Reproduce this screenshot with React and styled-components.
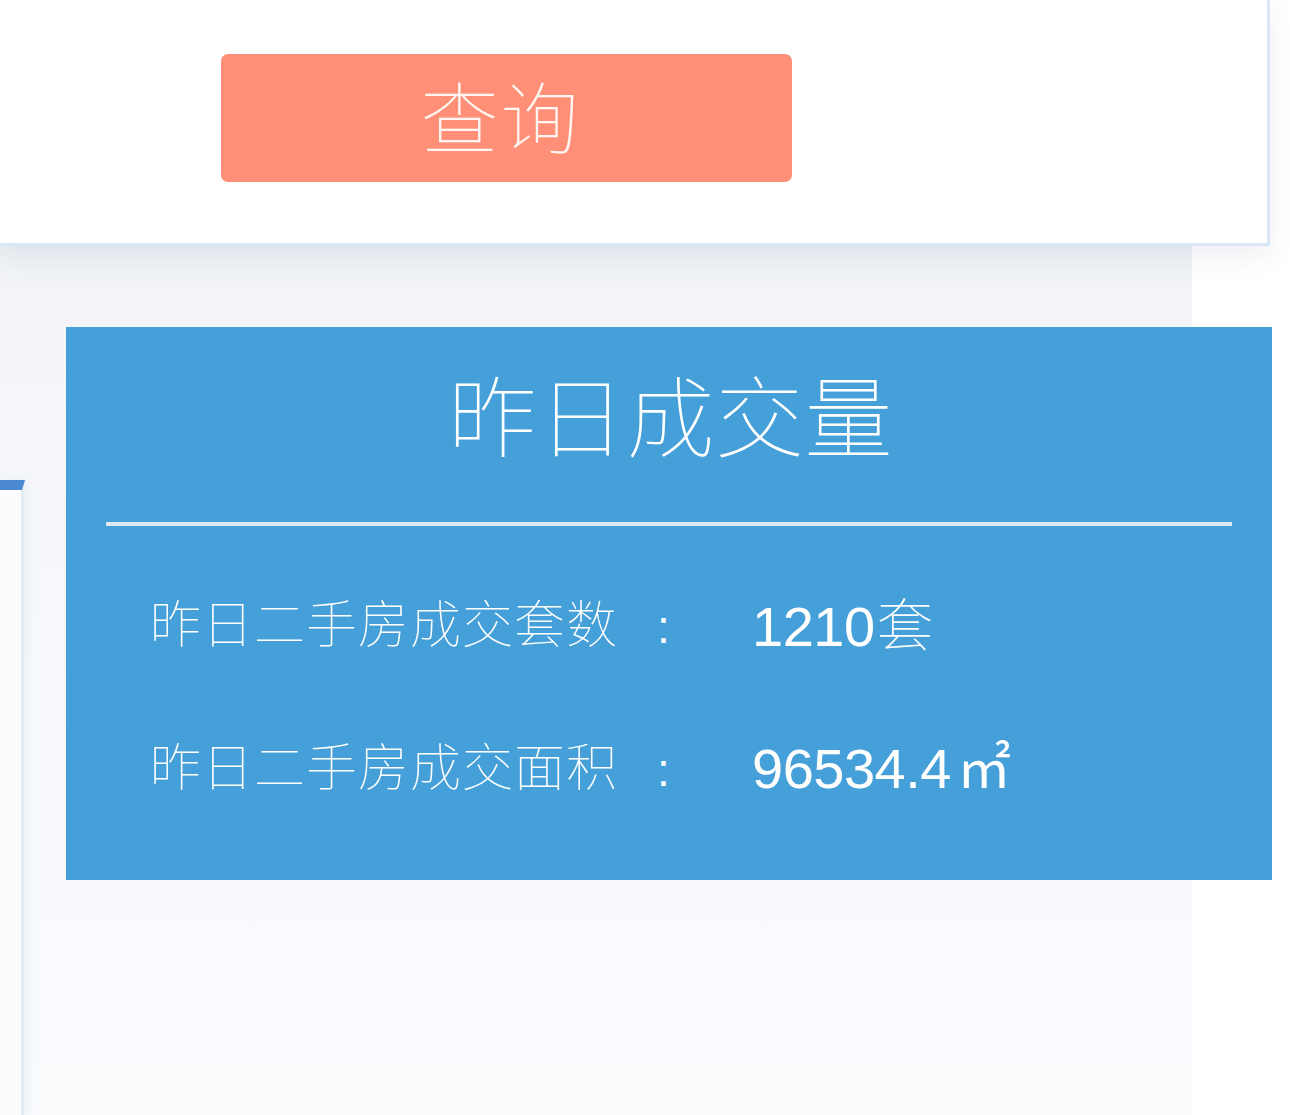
import React from "react";
import styled, {createGlobalStyle} from "styled-components";

const GlobalStyle = createGlobalStyle`
  html, body {
    margin: 0;
    padding: 0;
    background: #ffffff;
  }
  body {
    font-family: "Noto Sans CJK SC", "Noto Sans", sans-serif;
    overflow: hidden;
  }
`;

const stats = [
  {label: "昨日二手房成交套数", value: "1210", unit: "套"},
  {label: "昨日二手房成交面积", value: "96534.4", unit: "㎡"},
];

const App = () => {
  return <Page>
    <GlobalStyle/>
    <SearchCard>
      <QueryButton>查询</QueryButton>
    </SearchCard>
    <Lower>
      <Backdrop>
        <LeftRail>
          <RailCap/>
        </LeftRail>
        <StatCard>
          <StatTitle>昨日成交量</StatTitle>
          <Divider/>
          <StatList>
            {stats.map(s => (
              <StatRow key={s.label}>
                <StatLabel>{s.label}<Colon>:</Colon></StatLabel>
                <StatValue>
                  <Num>{s.value}</Num>
                  <Unit $area={s.unit === "㎡"}>{s.unit}</Unit>
                </StatValue>
              </StatRow>
            ))}
          </StatList>
        </StatCard>
      </Backdrop>
    </Lower>
  </Page>
};

const Page = styled.div`
  width: 1290px;
  height: 1115px;
  display: flex;
  flex-direction: column;
  background: #ffffff;
`;

const SearchCard = styled.div`
  position: relative;
  z-index: 2;
  flex: none;
  width: 1270px;
  height: 246px;
  box-sizing: border-box;
  background: #ffffff;
  border-right: 3px solid #d9e8f4;
  border-bottom: 3px solid #d9e8f4;
  box-shadow: 0 10px 24px rgba(150, 160, 180, 0.16);
  padding-left: 221px;
  padding-top: 54px;
`;

const QueryButton = styled.div`
  width: 571px;
  height: 128px;
  border-radius: 7px;
  background: #ff8f77;
  color: #fff6f2;
  font-size: 78px;
  font-weight: 100;
  letter-spacing: 2px;
  display: flex;
  align-items: center;
  justify-content: center;
  padding-right: 12px;
  padding-bottom: 8px;
  box-sizing: border-box;
`;

const Lower = styled.div`
  flex: 1;
  display: flex;
  background: #ffffff;
`;

const Backdrop = styled.div`
  width: 1192px;
  display: flex;
  align-items: flex-start;
  background: linear-gradient(180deg, #eef0f4 0px, #f3f5f9 60px, #f7f9fc 400px, #f9fbfd 100%);
`;

const LeftRail = styled.div`
  flex: none;
  width: 21px;
  align-self: stretch;
  margin-top: 234px;
  background: #fbfcfe;
  border-right: 3px solid #e2edf6;
  box-shadow: 4px 0 10px rgba(160, 175, 195, 0.12);
  position: relative;
`;

const RailCap = styled.div`
  position: absolute;
  top: 0;
  left: 0;
  width: 25px;
  height: 10px;
  background: #4b88d2;
  clip-path: polygon(0 0, 100% 0, 88% 100%, 0 100%);
`;

const StatCard = styled.div`
  flex: none;
  width: 1206px;
  height: 553px;
  margin-left: 42px;
  margin-top: 81px;
  background: #459fd8;
  color: #ffffff;
  display: flex;
  flex-direction: column;
  align-items: center;
`;

const StatTitle = styled.div`
  margin-top: 25px;
  height: 120px;
  font-size: 88px;
  font-weight: 100;
  letter-spacing: 1px;
  line-height: 120px;
  padding-left: 4px;
`;

const Divider = styled.div`
  margin-top: 50px;
  width: 1126px;
  height: 4px;
  background: #dde9f2;
`;

const StatList = styled.div`
  align-self: stretch;
  padding-left: 84px;
  margin-top: 60px;
  display: flex;
  flex-direction: column;
  gap: 73px;
`;

const StatRow = styled.div`
  display: flex;
  align-items: center;
  height: 70px;
`;

const StatLabel = styled.div`
  width: 602px;
  font-size: 51px;
  font-weight: 100;
  letter-spacing: 1px;
  white-space: nowrap;
`;

const Colon = styled.span`
  margin-left: 39px;
  font-family: "Liberation Sans", sans-serif;
  font-weight: 400;
  font-size: 46px;
`;

const StatValue = styled.div`
  display: flex;
  align-items: baseline;
  white-space: nowrap;
`;

const Num = styled.span`
  font-family: "Liberation Sans", "Helvetica", sans-serif;
  font-size: 56px;
  letter-spacing: -0.5px;
`;

const Unit = styled.span`
  font-size: ${p => p.$area ? "54px" : "57px"};
  font-weight: ${p => p.$area ? 400 : 100};
  margin-left: ${p => p.$area ? "6px" : "2px"};
`;

export default App;
